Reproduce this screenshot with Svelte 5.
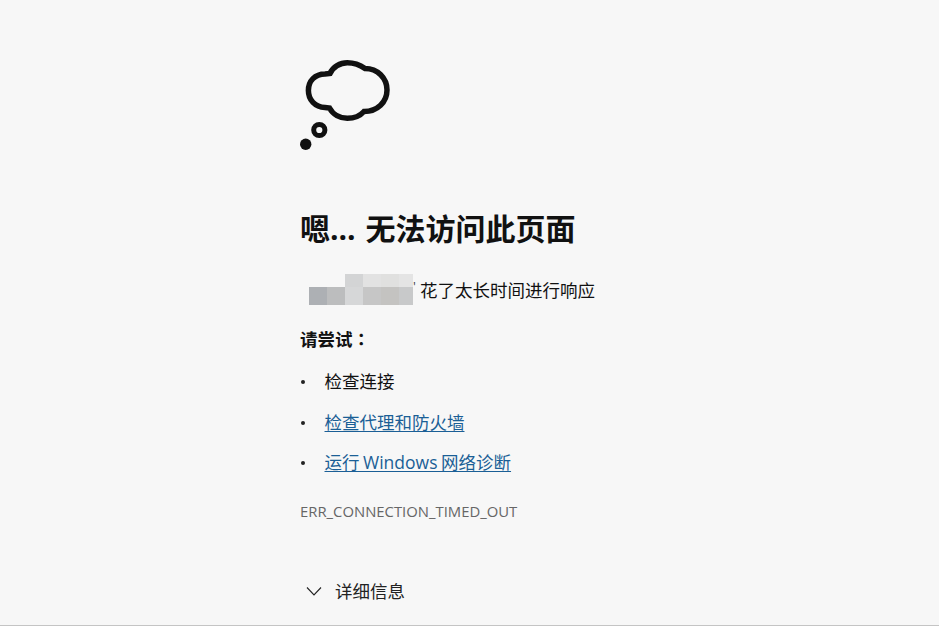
<script>
  const mosaic = [
    { w: 18, top: null, bottom: '#adb0b4' },
    { w: 18, top: null, bottom: '#bcbdbe' },
    { w: 18, top: '#d3d4d5', bottom: '#d6d7d8' },
    { w: 18, top: '#e2e2e2', bottom: '#c6c6c6' },
    { w: 18, top: '#e0e0df', bottom: '#c4c3c1' },
    { w: 14, top: '#e4e4e4', bottom: '#c8c9ca' }
  ];

  const tips = [
    { text: '检查连接' },
    { text: '检查代理和防火墙', link: true },
    { text: '运行 Windows 网络诊断', link: true }
  ];
</script>

<main class="page">
  <div class="content">
    <svg class="cloud" width="92" height="92" viewBox="0 0 92 92" aria-hidden="true">
      <path
        d="M30 15.5 C33 9 40 4.8 47.3 4.8 C54 4.8 60 7 65 10.5 C77.5 10.5 87 20 87 32 C87 44 77.5 53.5 64 53.5 C60 58 54 60.3 47.3 60.3 C40 60.3 33 56.5 29.5 50 L25 49.5 C15 49 8.4 42 8.4 32.5 C8.4 23 15 16 25 16 Z"
        fill="none"
        stroke="#111"
        stroke-width="5.5"
      />
      <circle cx="19.3" cy="72" r="5.6" fill="none" stroke="#111" stroke-width="5" />
      <circle cx="5.7" cy="86.3" r="5.7" fill="#111" />
    </svg>

    <h1>嗯... 无法访问此页面</h1>

    <p class="message">
      <span class="mosaic" aria-hidden="true">
        {#each mosaic as cell}
          <span class="cell" style="width: {cell.w}px">
            <i style="background: {cell.top ?? 'transparent'}"></i>
            <i style="background: {cell.bottom}"></i>
          </span>
        {/each}
      </span>
      <span class="tick">'</span>
      <span class="reason">花了太长时间进行响应</span>
    </p>

    <p class="try">请尝试<span class="colon">：</span></p>

    <ul>
      {#each tips as tip}
        <li>
          {#if tip.link}
            <a href="#top">{tip.text}</a>
          {:else}
            {tip.text}
          {/if}
        </li>
      {/each}
    </ul>

    <p class="code">ERR_CONNECTION_TIMED_OUT</p>

    <button class="details" type="button">
      <svg width="16" height="16" viewBox="0 0 16 16" aria-hidden="true">
        <path d="M1 4.5 L8 12 L15 4.5" fill="none" stroke="#222" stroke-width="1.1" />
      </svg>
      <span>详细信息</span>
    </button>
  </div>
</main>

<style>
  :global(body) {
    margin: 0;
    background: #f7f7f7;
  }

  .page {
    box-sizing: border-box;
    height: 626px;
    overflow: hidden;
    border-bottom: 1px solid #c4c4c4;
    padding: 58px 0 0 300px;
    font-family: "Open Sans", "Noto Sans CJK SC", sans-serif;
    font-size: 17.5px;
    line-height: 26px;
    color: #111;
  }

  .content {
    width: 400px;
  }

  .cloud {
    display: block;
  }

  h1 {
    margin: 59px 0 0;
    font-size: 30px;
    line-height: 40px;
    font-weight: 700;
    color: #111;
    white-space: nowrap;
    word-spacing: 2px;
  }

  .message {
    display: flex;
    align-items: flex-start;
    height: 31px;
    margin: 25px 0 0 9px;
    white-space: nowrap;
  }

  .mosaic {
    display: flex;
  }

  .cell {
    display: flex;
    flex-direction: column;
  }

  .cell i {
    display: block;
    height: 13px;
  }

  .cell i + i {
    height: 18px;
  }

  .tick {
    width: 7px;
    font-size: 13px;
    line-height: 24px;
    color: #444;
  }

  .reason {
    padding-top: 3px;
  }

  .try {
    margin: 21px 0 0;
    font-weight: 700;
  }

  .colon {
    font-family: "Noto Sans CJK TC", sans-serif;
  }

  ul {
    list-style: none;
    margin: 16px 0 0;
    padding: 0;
    display: flex;
    flex-direction: column;
    gap: 14.5px;
  }

  li {
    position: relative;
    padding-left: 24.5px;
  }

  li::before {
    content: "";
    position: absolute;
    left: 1px;
    top: 12px;
    width: 4px;
    height: 4px;
    border-radius: 50%;
    background: #222;
  }

  a {
    color: #1b5f96;
    text-decoration: underline;
    text-underline-offset: 2px;
    word-spacing: -1px;
  }

  .code {
    margin: 25px 0 0;
    font-size: 14.85px;
    line-height: 22px;
    color: #666;
    white-space: nowrap;
  }

  .details {
    display: flex;
    align-items: center;
    gap: 13px;
    margin: 56px 0 0 6px;
    padding: 0;
    border: 0;
    background: none;
    font: inherit;
    color: #222;
  }
</style>
